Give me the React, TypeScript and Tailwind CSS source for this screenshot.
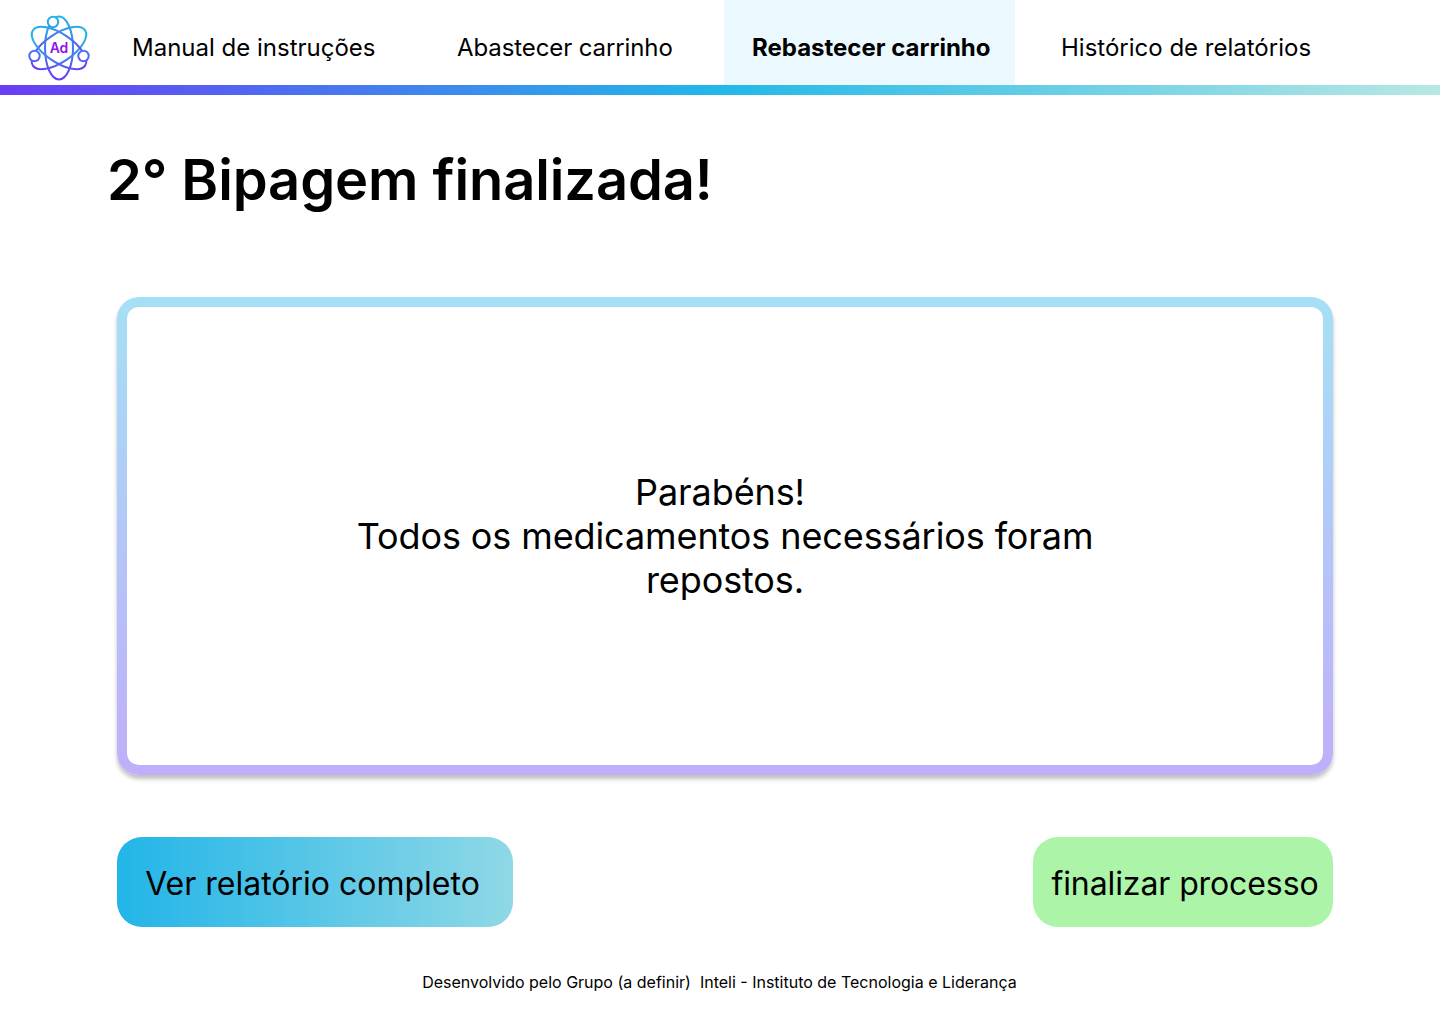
const navItems = [
  { label: 'Manual de instruções', className: 'w-[328px] pl-[3px]' },
  { label: 'Abastecer carrinho', className: 'w-[267px] tracking-[-0.1px]' },
]

const Logo = () => (
  <svg width="62" height="66" viewBox="0 0 62 66" fill="none" aria-hidden="true">
    <defs>
      <linearGradient id="logoStroke" gradientUnits="userSpaceOnUse" x1="31" y1="1" x2="31" y2="65">
        <stop offset="0" stopColor="#22b5e8" />
        <stop offset="1" stopColor="#6a3df5" />
      </linearGradient>
    </defs>
    <g stroke="url(#logoStroke)" strokeWidth="2">
      <ellipse cx="31" cy="33" rx="14" ry="31.5" />
      <ellipse cx="31" cy="33" rx="14" ry="31.5" transform="rotate(56 31 33)" />
      <ellipse cx="31" cy="33" rx="14" ry="31.5" transform="rotate(-56 31 33)" />
      <circle cx="25" cy="7" r="5.2" fill="#fff" />
      <circle cx="6.5" cy="41" r="5.2" fill="#fff" />
      <circle cx="55.5" cy="41" r="5.2" fill="#fff" />
    </g>
    <text x="31" y="38" textAnchor="middle" fontSize="14" fontWeight="600" fill="#9013e8" fontFamily="Inter, sans-serif">
      Ad
    </text>
  </svg>
)

const App = () => {
  return (
    <div className="min-h-[1024px] bg-white font-['Inter',sans-serif] text-black">
      <header>
        <div className="flex h-[85px] items-stretch">
          <div className="flex w-[129px] items-center pl-[28px] pt-[10px]">
            <Logo />
          </div>
          {navItems.map((item) => (
            <a key={item.label} className={`flex items-center pt-[10px] text-[24px] ${item.className}`}>
              {item.label}
            </a>
          ))}
          <a className="flex w-[291px] items-center bg-[#ebf8fe] pl-[28px] pt-[10px] text-[24px] font-bold">
            Rebastecer carrinho
          </a>
          <a className="flex items-center pl-[46px] pt-[10px] text-[24px]">Histórico de relatórios</a>
        </div>
        <div className="h-[10px] bg-[linear-gradient(90deg,#6a3df5_0%,#22b8e8_50%,#b8e8e4_100%)]" />
      </header>

      <main className="pl-[117px] pr-[107px]">
        <h1 className="-ml-[10px] mt-[51px] text-[56px] leading-[68px] font-semibold tracking-[-0.1px]">
          2° Bipagem finalizada!
        </h1>

        <div className="mt-[83px] h-[478px] rounded-[22px] bg-[linear-gradient(180deg,#a5e0f6_0%,#c0aefa_100%)] p-[10px] shadow-[0_4px_4px_rgba(0,0,0,0.25)]">
          <div className="flex h-full items-center justify-center rounded-[12px] bg-white">
            <p className="w-[760px] text-center text-[36px] leading-[44px] tracking-[-0.1px]">
              Parabéns!&nbsp;
              <br />
              Todos os medicamentos necessários foram repostos.
            </p>
          </div>
        </div>

        <div className="mt-[62px] flex justify-between">
          <button className="h-[90px] w-[396px] rounded-[25px] bg-[linear-gradient(90deg,#22b5e8_0%,#8fd8e6_100%)] pr-[5px] pt-[4px] text-[32px]">
            Ver relatório completo
          </button>
          <button className="h-[90px] w-[300px] rounded-[25px] bg-[#acf4a8] pl-[4px] pt-[4px] text-[32px] tracking-[-0.1px] whitespace-nowrap">
            finalizar processo
          </button>
        </div>
      </main>

      <footer className="mt-[45px] pr-px text-center text-[16px] leading-[20px]">
        Desenvolvido pelo Grupo (a definir)&nbsp; Inteli - Instituto de Tecnologia e Liderança
      </footer>
    </div>
  )
}

export default App
